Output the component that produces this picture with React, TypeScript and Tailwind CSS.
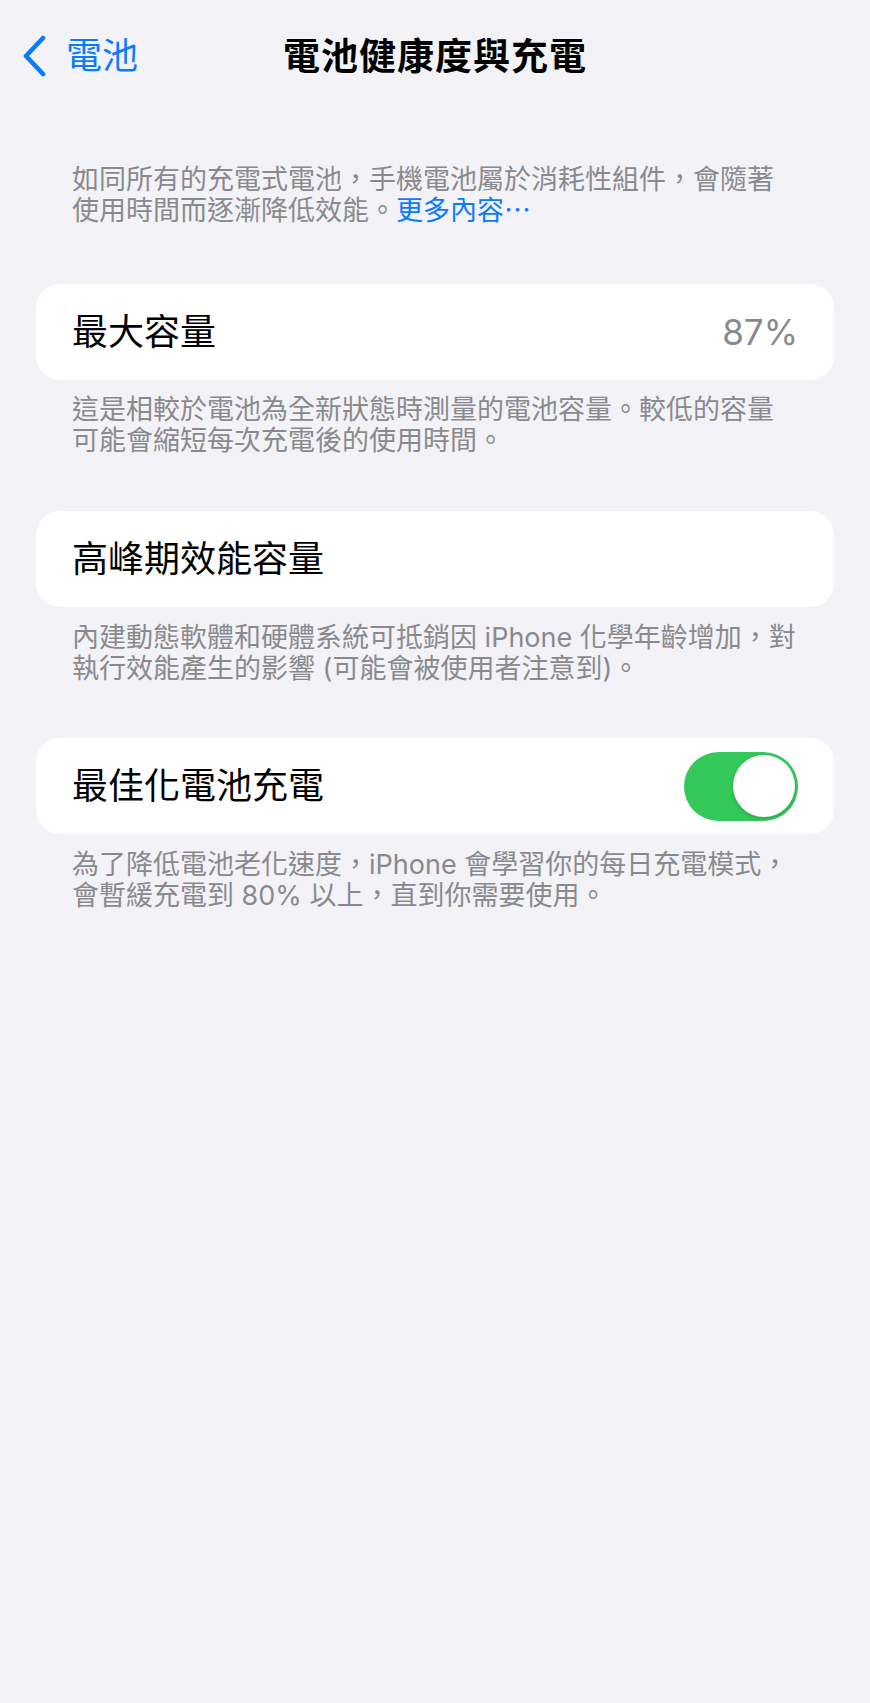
const font = "font-['Inter','Noto_Sans_CJK_TC',sans-serif]";

function Card({ children }: { children: React.ReactNode }) {
  return (
    <div className="mx-[36px] h-[96px] rounded-[24px] bg-white px-[36px] flex items-center justify-between">
      {children}
    </div>
  );
}

function Footer({ children, className = "" }: { children: React.ReactNode; className?: string }) {
  return (
    <p className={`mx-[36px] px-[36px] text-[27px] leading-[31px] text-[#8a8a8e] whitespace-nowrap ${className}`}>
      {children}
    </p>
  );
}

function Toggle() {
  return (
    <div className="w-[114px] h-[69px] rounded-full bg-[#34c759] flex items-center justify-end p-[3.5px]">
      <div className="w-[62px] h-[62px] rounded-full bg-white shadow-[0_2px_4px_rgba(0,0,0,0.15)]" />
    </div>
  );
}

export default function App() {
  return (
    <div className={`min-h-[1703px] bg-[#f2f2f7] text-black ${font}`}>
      {/* nav bar */}
      <div className="h-[112px] grid grid-cols-[1fr_auto_1fr] items-center">
        <div className="flex items-center pl-[22px] gap-[19px] text-[#0a7aff]">
          <svg width="25" height="42" viewBox="0 0 25 42" fill="none">
            <polyline
              points="21,3 4,21 21,39"
              stroke="currentColor"
              strokeWidth="4.6"
              strokeLinecap="round"
              strokeLinejoin="round"
            />
          </svg>
          <span className="text-[36px] leading-none">電池</span>
        </div>
        <h1 className="text-[37px] font-bold leading-none tracking-[1px]">電池健康度與充電</h1>
        <div />
      </div>

      <Footer className="mt-[52px]">
        如同所有的充電式電池，手機電池屬於消耗性組件，會隨著
        <br />
        使用時間而逐漸降低效能。<span className="text-[#0a7aff]">更多內容⋯</span>
      </Footer>

      <div className="mt-[58px]">
        <Card>
          <span className="text-[36px]">最大容量</span>
          <span className="text-[35px] text-[#8a8a8e]">87%</span>
        </Card>
        <Footer className="mt-[14px]">
          這是相較於電池為全新狀態時測量的電池容量。較低的容量
          <br />
          可能會縮短每次充電後的使用時間。
        </Footer>
      </div>

      <div className="mt-[55px]">
        <Card>
          <span className="text-[36px]">高峰期效能容量</span>
        </Card>
        <Footer className="mt-[15px]">
          內建動態軟體和硬體系統可抵銷因 iPhone 化學年齡增加，對
          <br />
          執行效能產生的影響 (可能會被使用者注意到)。
        </Footer>
      </div>

      <div className="mt-[54px]">
        <Card>
          <span className="text-[36px]">最佳化電池充電</span>
          <Toggle />
        </Card>
        <Footer className="mt-[15px]">
          為了降低電池老化速度，iPhone 會學習你的每日充電模式，
          <br />
          會暫緩充電到 80% 以上，直到你需要使用。
        </Footer>
      </div>
    </div>
  );
}
